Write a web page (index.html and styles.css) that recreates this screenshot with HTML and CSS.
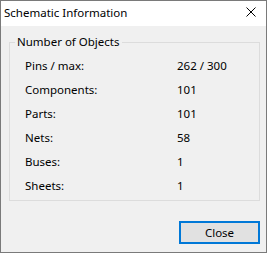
FILE: index.html
```html
<!DOCTYPE html>
<html>
<head>
    <meta charset="UTF-8">
    <title>Schematic Information</title>
    <link rel="stylesheet" href="styles.css">
</head>
<body>
    <div class="window">
        <div class="titlebar">
            <span class="title">Schematic Information</span>
            <span class="close-x">
                <svg width="10" height="10" viewBox="0 0 10 10">
                    <path d="M0.5 0.5 L9.5 9.5 M9.5 0.5 L0.5 9.5" stroke="#000" stroke-width="1" fill="none"/>
                </svg>
            </span>
        </div>

        <div class="content">
            <fieldset class="group">
                <legend>Number of Objects</legend>
                <div class="row"><span class="label">Pins / max:</span><span>262 / 300</span></div>
                <div class="row"><span class="label">Components:</span><span>101</span></div>
                <div class="row"><span class="label">Parts:</span><span>101</span></div>
                <div class="row"><span class="label">Nets:</span><span>58</span></div>
                <div class="row"><span class="label">Buses:</span><span>1</span></div>
                <div class="row"><span class="label">Sheets:</span><span>1</span></div>
            </fieldset>

            <div class="buttons">
                <button class="btn">Close</button>
            </div>
        </div>
    </div>
</body>
</html>
```

FILE: styles.css
```css
* {
    margin: 0;
    padding: 0;
    box-sizing: border-box;
}

body {
    font-family: "Noto Sans", "Open Sans", sans-serif;
    font-size: 11.5px;
    color: #000;
    background: #f0f0f0;
    width: 267px;
    height: 253px;
}

.window {
    width: 267px;
    height: 253px;
    border: 1px solid #7a7a7a;
    background: #f0f0f0;
    display: flex;
    flex-direction: column;
}

.titlebar {
    height: 25px;
    background: #fff;
    display: flex;
    align-items: center;
    justify-content: space-between;
    padding: 0 10px 0 3px;
}

.title {
    line-height: 16px;
    margin-top: -1px;
}

.close-x {
    display: flex;
    margin-top: -3px;
}

.content {
    flex: 1;
    padding: 8px 6px 0 8px;
}

.group {
    border: 1px solid #dcdcdc;
    padding: 3px 0 3px 0;
}

.group legend {
    margin-left: 5px;
    padding: 0 2px 0 2px;
    line-height: 16px;
}

.row {
    display: flex;
    height: 24px;
    align-items: center;
    padding-left: 15px;
}

.label {
    width: 152px;
}

.buttons {
    display: flex;
    justify-content: flex-end;
    margin-top: 20px;
}

.btn {
    width: 81px;
    height: 23px;
    border: 2px solid #0078d7;
    background: #e1e1e1;
    font-family: inherit;
    font-size: 11.5px;
    color: #000;
}
```
